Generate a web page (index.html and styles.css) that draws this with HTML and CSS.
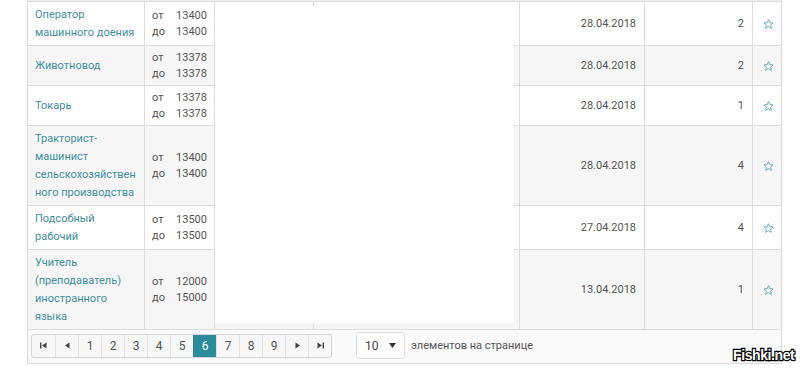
FILE: index.html
```html
<!DOCTYPE html>
<html lang="ru">
<head>
<meta charset="utf-8">
<link rel="stylesheet" href="styles.css">
</head>
<body>
<div class="grid">
  <div class="head-strip"></div>
  <div class="row">
    <div class="cell name"><a>Оператор машинного доения</a></div>
    <div class="cell sal"><div class="sl"><span>от</span><span>13400</span></div><div class="sl"><span>до</span><span>13400</span></div></div>
    <div class="cell"></div><div class="cell"></div>
    <div class="cell num">28.04.2018</div>
    <div class="cell num">2</div>
    <div class="cell star"><svg width="11" height="10" viewBox="0 0 24 23"><path d="M12 1.5l3.1 6.9 7.4.7-5.6 5 1.7 7.4L12 17.6l-6.6 3.9 1.7-7.4-5.6-5 7.4-.7z" fill="none" stroke="#5eabbb" stroke-width="2.2" stroke-linejoin="round"/></svg></div>
  </div>
  <div class="row alt">
    <div class="cell name"><a>Животновод</a></div>
    <div class="cell sal"><div class="sl"><span>от</span><span>13378</span></div><div class="sl"><span>до</span><span>13378</span></div></div>
    <div class="cell"></div><div class="cell"></div>
    <div class="cell num">28.04.2018</div>
    <div class="cell num">2</div>
    <div class="cell star"><svg width="11" height="10" viewBox="0 0 24 23"><path d="M12 1.5l3.1 6.9 7.4.7-5.6 5 1.7 7.4L12 17.6l-6.6 3.9 1.7-7.4-5.6-5 7.4-.7z" fill="none" stroke="#5eabbb" stroke-width="2.2" stroke-linejoin="round"/></svg></div>
  </div>
  <div class="row">
    <div class="cell name"><a>Токарь</a></div>
    <div class="cell sal"><div class="sl"><span>от</span><span>13378</span></div><div class="sl"><span>до</span><span>13378</span></div></div>
    <div class="cell"></div><div class="cell"></div>
    <div class="cell num">28.04.2018</div>
    <div class="cell num">1</div>
    <div class="cell star"><svg width="11" height="10" viewBox="0 0 24 23"><path d="M12 1.5l3.1 6.9 7.4.7-5.6 5 1.7 7.4L12 17.6l-6.6 3.9 1.7-7.4-5.6-5 7.4-.7z" fill="none" stroke="#5eabbb" stroke-width="2.2" stroke-linejoin="round"/></svg></div>
  </div>
  <div class="row alt">
    <div class="cell name"><a>Тракторист-машинист сельскохозяйствен<wbr>ного производства</a></div>
    <div class="cell sal"><div class="sl"><span>от</span><span>13400</span></div><div class="sl"><span>до</span><span>13400</span></div></div>
    <div class="cell"></div><div class="cell"></div>
    <div class="cell num">28.04.2018</div>
    <div class="cell num">4</div>
    <div class="cell star"><svg width="11" height="10" viewBox="0 0 24 23"><path d="M12 1.5l3.1 6.9 7.4.7-5.6 5 1.7 7.4L12 17.6l-6.6 3.9 1.7-7.4-5.6-5 7.4-.7z" fill="none" stroke="#5eabbb" stroke-width="2.2" stroke-linejoin="round"/></svg></div>
  </div>
  <div class="row">
    <div class="cell name"><a>Подсобный рабочий</a></div>
    <div class="cell sal"><div class="sl"><span>от</span><span>13500</span></div><div class="sl"><span>до</span><span>13500</span></div></div>
    <div class="cell"></div><div class="cell"></div>
    <div class="cell num">27.04.2018</div>
    <div class="cell num">4</div>
    <div class="cell star"><svg width="11" height="10" viewBox="0 0 24 23"><path d="M12 1.5l3.1 6.9 7.4.7-5.6 5 1.7 7.4L12 17.6l-6.6 3.9 1.7-7.4-5.6-5 7.4-.7z" fill="none" stroke="#5eabbb" stroke-width="2.2" stroke-linejoin="round"/></svg></div>
  </div>
  <div class="row alt">
    <div class="cell name"><a>Учитель (преподаватель) иностранного языка</a></div>
    <div class="cell sal"><div class="sl"><span>от</span><span>12000</span></div><div class="sl"><span>до</span><span>15000</span></div></div>
    <div class="cell"></div><div class="cell"></div>
    <div class="cell num">13.04.2018</div>
    <div class="cell num">1</div>
    <div class="cell star"><svg width="11" height="10" viewBox="0 0 24 23"><path d="M12 1.5l3.1 6.9 7.4.7-5.6 5 1.7 7.4L12 17.6l-6.6 3.9 1.7-7.4-5.6-5 7.4-.7z" fill="none" stroke="#5eabbb" stroke-width="2.2" stroke-linejoin="round"/></svg></div>
  </div>
  <div class="blank"></div>
  <div class="pager-bar">
    <div class="pager">
      <span class="pb"><svg width="7" height="7" viewBox="0 0 7 7"><rect x="0" y="0.5" width="1.4" height="6" fill="#444"/><path d="M6.5 0.5v6L2 3.5z" fill="#444"/></svg></span>
      <span class="pb"><svg width="5" height="7" viewBox="0 0 5 7"><path d="M4.5 0.5v6L0 3.5z" fill="#444"/></svg></span>
      <span class="pb">1</span>
      <span class="pb">2</span>
      <span class="pb">3</span>
      <span class="pb">4</span>
      <span class="pb">5</span>
      <span class="pb active">6</span>
      <span class="pb">7</span>
      <span class="pb">8</span>
      <span class="pb">9</span>
      <span class="pb"><svg width="5" height="7" viewBox="0 0 5 7"><path d="M0.5 0.5v6L5 3.5z" fill="#444"/></svg></span>
      <span class="pb"><svg width="7" height="7" viewBox="0 0 7 7"><path d="M0.5 0.5v6L5 3.5z" fill="#444"/><rect x="5.6" y="0.5" width="1.4" height="6" fill="#444"/></svg></span>
    </div>
    <div class="size-select"><span>10</span><svg width="7" height="5" viewBox="0 0 7 5"><path d="M0 0h7L3.5 5z" fill="#333"/></svg></div>
    <span class="size-label">элементов на странице</span>
  </div>
</div>
<div class="watermark">Fishki.net</div>
</body>
</html>
```
FILE: styles.css
```css
* { box-sizing: border-box; }
html, body { margin: 0; padding: 0; background: #fff; }
body {
  font-family: Roboto, "Noto Sans", sans-serif;
  font-size: 11px;
  color: #555;
  width: 800px;
  height: 369px;
  overflow: hidden;
  position: relative;
}
.grid {
  position: relative;
  margin-left: 27px;
  width: 755px;
  border-left: 1px solid #dcdcdc;
  border-right: 1px solid #dcdcdc;
}
.head-strip {
  height: 2px;
  background: #efefef;
  border-bottom: 1px solid #dcdcdc;
}
.row {
  display: grid;
  grid-template-columns: 117px 70px 99px 206px 125px 108px 1fr;
  border-bottom: 1px solid #dcdcdc;
  background: #fff;
}
.row.alt { background: #f6f6f6; }
.cell {
  border-right: 1px solid #dcdcdc;
  padding: 4px 7px 3px;
  display: flex;
  align-items: center;
  line-height: 18px;
}
.cell:last-child { border-right: none; }
.name a { color: #3f8fa1; text-decoration: none; }
.sal { flex-direction: column; justify-content: center; align-items: stretch; line-height: 16px; }
.sl { display: flex; justify-content: space-between; }
.num { justify-content: flex-end; padding-right: 8px; }
.star { justify-content: center; padding: 0 0 0 2px; }
.star svg { display: block; }
.blank {
  position: absolute;
  left: 187px;
  top: 7px;
  width: 299px;
  height: 316px;
  background: #fff;
}
.pager-bar {
  display: flex;
  align-items: center;
  padding: 2px 3px 4px;
  background: #fafafa;
  border-bottom: 1px solid #dcdcdc;
}
.pager {
  display: flex;
  border: 1px solid #d6d6d6;
  border-radius: 3px;
  background: #f7f7f7;
  height: 24px;
  overflow: hidden;
}
.pb {
  width: 23px;
  display: flex;
  align-items: center;
  justify-content: center;
  border-left: 1px solid #e2e2e2;
  font-size: 12px;
  color: #555;
}
.pb:first-child { border-left: none; }
.pb.active { background: #2c8b9a; color: #fff; border-left-color: #2c8b9a; }
.size-select {
  margin-left: 24px;
  width: 49px;
  height: 27px;
  border: 1px solid #dcdcdc;
  border-radius: 3px;
  background: #fff;
  display: flex;
  align-items: center;
  justify-content: space-between;
  padding: 0 8px 0 8px;
  font-size: 12px;
  color: #444;
}
.size-label { margin-left: 6px; font-size: 11px; color: #555; }
.watermark {
  position: absolute;
  left: 733px;
  top: 347px;
  font-family: "Liberation Sans", Arial, sans-serif;
  font-weight: bold;
  font-size: 14px;
  letter-spacing: -0.4px;
  color: #fff;
  -webkit-text-stroke: 2.4px #000;
  paint-order: stroke fill;
}
```
